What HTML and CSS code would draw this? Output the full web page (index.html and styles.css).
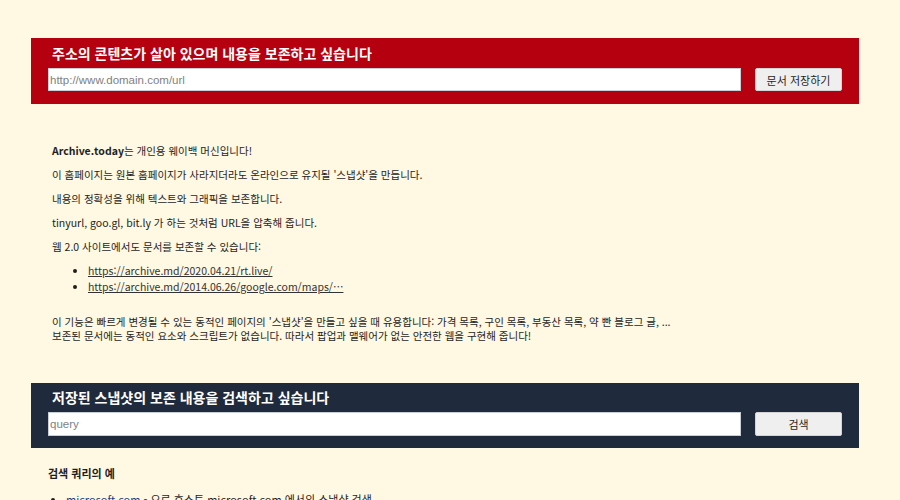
FILE: index.html
```html
<!DOCTYPE html>
<html lang="ko">
<head>
<meta charset="utf-8">
<title>archive.today</title>
<link rel="stylesheet" href="styles.css">
</head>
<body>
<form class="panel panel-red">
  <div class="panel-title">주소의 콘텐츠가 살아 있으며 내용을 보존하고 싶습니다</div>
  <div class="panel-row">
    <input class="panel-input" type="text" placeholder="http://www.domain.com/url">
    <button class="panel-btn" type="button">문서 저장하기</button>
  </div>
</form>

<div class="intro">
  <p><b>Archive.today</b>는 개인용 웨이백 머신입니다!</p>
  <p>이 홈페이지는 원본 홈페이지가 사라지더라도 온라인으로 유지될 '스냅샷'을 만듭니다.</p>
  <p>내용의 정확성을 위해 텍스트와 그래픽을 보존합니다.</p>
  <p>tinyurl, goo.gl, bit.ly 가 하는 것처럼 URL을 압축해 줍니다.</p>
  <p class="before-list">웹 2.0 사이트에서도 문서를 보존할 수 있습니다:</p>
  <ul class="links">
    <li><a href="#">https://archive.md/2020.04.21/rt.live/</a></li>
    <li><a href="#">https://archive.md/2014.06.26/google.com/maps/…</a></li>
  </ul>
  <p class="tight">이 기능은 빠르게 변경될 수 있는 동적인 페이지의 '스냅샷'을 만들고 싶을 때 유용합니다: 가격 목록, 구인 목록, 부동산 목록, 약 빤 블로그 글, ...<br>보존된 문서에는 동적인 요소와 스크립트가 없습니다. 따라서 팝업과 맬웨어가 없는 안전한 웹을 구현해 줍니다!</p>
</div>

<form class="panel panel-dark">
  <div class="panel-title">저장된 스냅샷의 보존 내용을 검색하고 싶습니다</div>
  <div class="panel-row">
    <input class="panel-input" type="text" placeholder="query">
    <button class="panel-btn" type="button">검색</button>
  </div>
</form>

<div class="examples">
  <div class="examples-title">검색 쿼리의 예</div>
  <ul class="ex-list">
    <li><a href="#">microsoft.com</a> - 으로 호스트 microsoft.com 에서의 스냅샷 검색</li>
  </ul>
</div>
</body>
</html>
```

FILE: styles.css
```css
html, body {
  margin: 0;
  padding: 0;
  background: #fff8e2;
}
body {
  font-family: "Noto Sans CJK KR", "Noto Sans", sans-serif;
  color: #1e1e1e;
  font-size: 10.5px;
  overflow: hidden;
  height: 500px;
}
.panel {
  margin: 38px 41px 0 31px;
  padding: 5px 17px 12px 17px;
  box-sizing: border-box;
}
.panel-red {
  background: #b5000f;
  height: 66px;
}
.panel-dark {
  background: #1f2b3c;
  height: 65px;
  margin-top: 40px;
  padding-top: 4px;
}
.panel-title {
  color: #fff;
  font-weight: bold;
  font-size: 14px;
  line-height: 21px;
  padding-left: 4px;
  height: 25px;
}
.panel-row {
  display: flex;
  align-items: center;
  gap: 14px;
}
.panel-input {
  width: 693px;
  height: 23px;
  box-sizing: border-box;
  border: 1px solid #c9ced6;
  background: #fff;
  font-family: "Liberation Sans", Arial, sans-serif;
  font-size: 11.5px;
  padding: 0 1px;
  margin: 0;
  outline: none;
}
.panel-dark .panel-input {
  height: 24px;
}
.panel-input::placeholder {
  color: #7f7f7f;
}
.panel-btn {
  width: 87px;
  height: 23px;
  box-sizing: border-box;
  border: 1px solid #d4d4d4;
  border-radius: 2px;
  background: #efefef;
  color: #262626;
  font-family: "Noto Sans CJK KR", sans-serif;
  font-size: 11px;
  padding: 0;
  margin: 0;
}
.panel-dark .panel-btn {
  height: 24px;
}
.intro {
  margin: 40px 0 0 52px;
}
.intro p {
  margin: 0 0 10px 0;
  line-height: 14px;
}
.intro p.before-list {
  margin-bottom: 9px;
}
.intro b {
  font-weight: bold;
}
.links {
  margin: 9px 0 20px 0;
  padding-left: 36px;
  list-style: disc;
}
.links li {
  line-height: 16px;
  font-size: 10.5px;
}
.links a {
  color: #333;
  text-decoration: underline;
}
.intro p.tight {
  margin: 0;
  line-height: 14px;
}
.examples {
  margin: 17px 0 0 48px;
}
.examples-title {
  font-weight: bold;
  font-size: 11px;
  line-height: 16px;
}
.ex-list {
  margin: 10px 0 0 0;
  padding-left: 18px;
}
.ex-list li {
  line-height: 16px;
  font-size: 11px;
}
.ex-list a {
  color: #1d3b7a;
  text-decoration: none;
}
```
